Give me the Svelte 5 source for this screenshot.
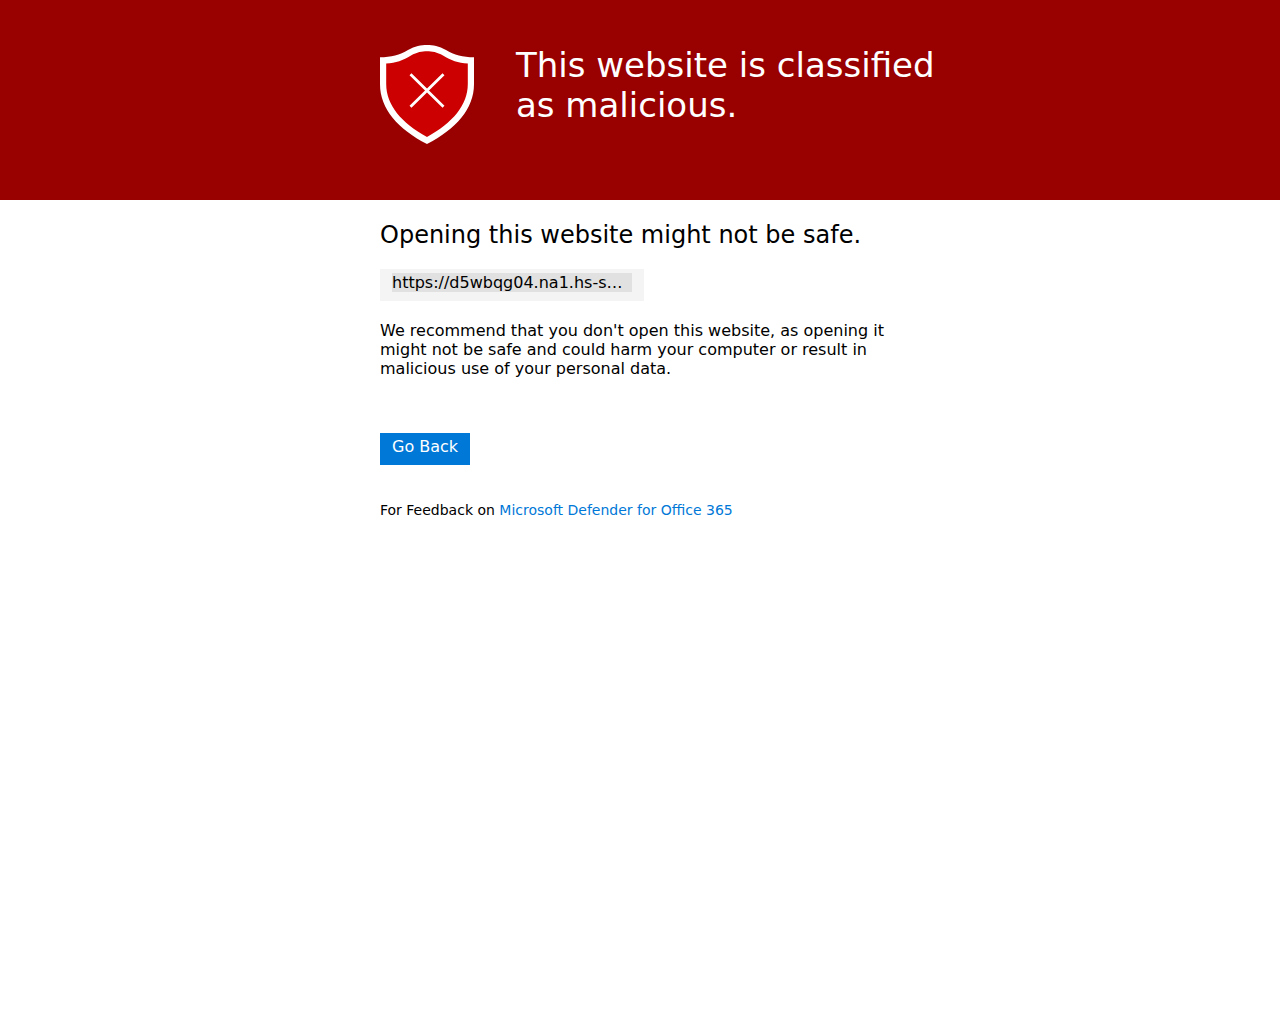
<script lang="ts">
  const blockedUrl = 'https://d5wbqg04.na1.hs-s…';

  const goBack = () => {
    window.history.back();
  };
</script>

<div class="warning">
  <header class="warning__banner">
    <div class="warning__column warning__column--banner">
      <svg class="warning__shield" viewBox="0 0 94 99" aria-hidden="true">
        <path
          fill="#fff"
          d="M0 12.3C11 12.2 20 10 28 5C35 1 41 0 47 0C53 0 59 1 66 5C74 10 83 12.2 94 12.3V39C94 64 76 84 47 99C18 84 0 64 0 39Z"
        />
        <path
          fill="#c00"
          d="M6.2 18.6C16 18 23 15.5 31 10.5C37 7 42 6.2 47 6.2C52 6.2 57 7 63 10.5C71 15.5 78 18 87.8 18.6V39C87.8 60 72.5 78 47 92C21.5 78 6.2 60 6.2 39Z"
        />
        <path fill="none" stroke="#fff" stroke-width="2.8" d="M30.5 29.3L63.5 61.8M63.5 29.3L30.5 61.8" />
      </svg>
      <h1 class="warning__title">This website is classified as malicious.</h1>
    </div>
  </header>

  <main class="warning__column">
    <h2 class="warning__heading">Opening this website might not be safe.</h2>
    <div class="warning__url"><span>{blockedUrl}</span></div>
    <p class="warning__text">
      We recommend that you don't open this website, as opening it might not be safe and could harm
      your computer or result in malicious use of your personal data.
    </p>
    <button type="button" class="warning__button" on:click={goBack}>Go Back</button>
    <p class="warning__feedback">
      For Feedback on <a href="#feedback">Microsoft Defender for Office 365</a>
    </p>
  </main>
</div>

<style>
  :global(body) {
    background: #fff;
  }

  .warning {
    color: #000;
    font-family: 'DejaVu Sans', sans-serif;
    font-size: 16px;
    line-height: 19px;
  }

  .warning__banner {
    min-height: 200px;
    background: #900;
  }

  .warning__column {
    box-sizing: border-box;
    max-width: 520px;
    margin: 0 auto;
  }

  .warning__column--banner {
    display: flex;
    gap: 42px;
    padding-top: 45px;
  }

  .warning__shield {
    flex: none;
    width: 94px;
    height: 99px;
  }

  .warning__title {
    flex: none;
    width: 420px;
    margin: 0;
    color: #fff;
    font-size: 34px;
    font-weight: 400;
    line-height: 40px;
  }

  .warning__heading {
    margin: 20px 0 19px;
    font-size: 24px;
    font-weight: 400;
    line-height: 30px;
  }

  .warning__url {
    box-sizing: border-box;
    width: 264px;
    height: 32px;
    padding: 4px 12px;
    background: #f4f4f4;
  }

  .warning__url span {
    display: block;
    overflow: hidden;
    background: #e1e1e1;
    text-overflow: ellipsis;
    white-space: nowrap;
  }

  .warning__text {
    margin: 20px 0 55px;
  }

  .warning__button {
    display: block;
    height: 32px;
    padding: 4px 12px 9px;
    border: 0;
    background: #0078d7;
    color: #fff;
    font: inherit;
    cursor: pointer;
  }

  .warning__feedback {
    margin: 36px 0 0;
    font-size: 14px;
  }

  .warning__feedback a {
    color: #0078d7;
    text-decoration: none;
  }
</style>
